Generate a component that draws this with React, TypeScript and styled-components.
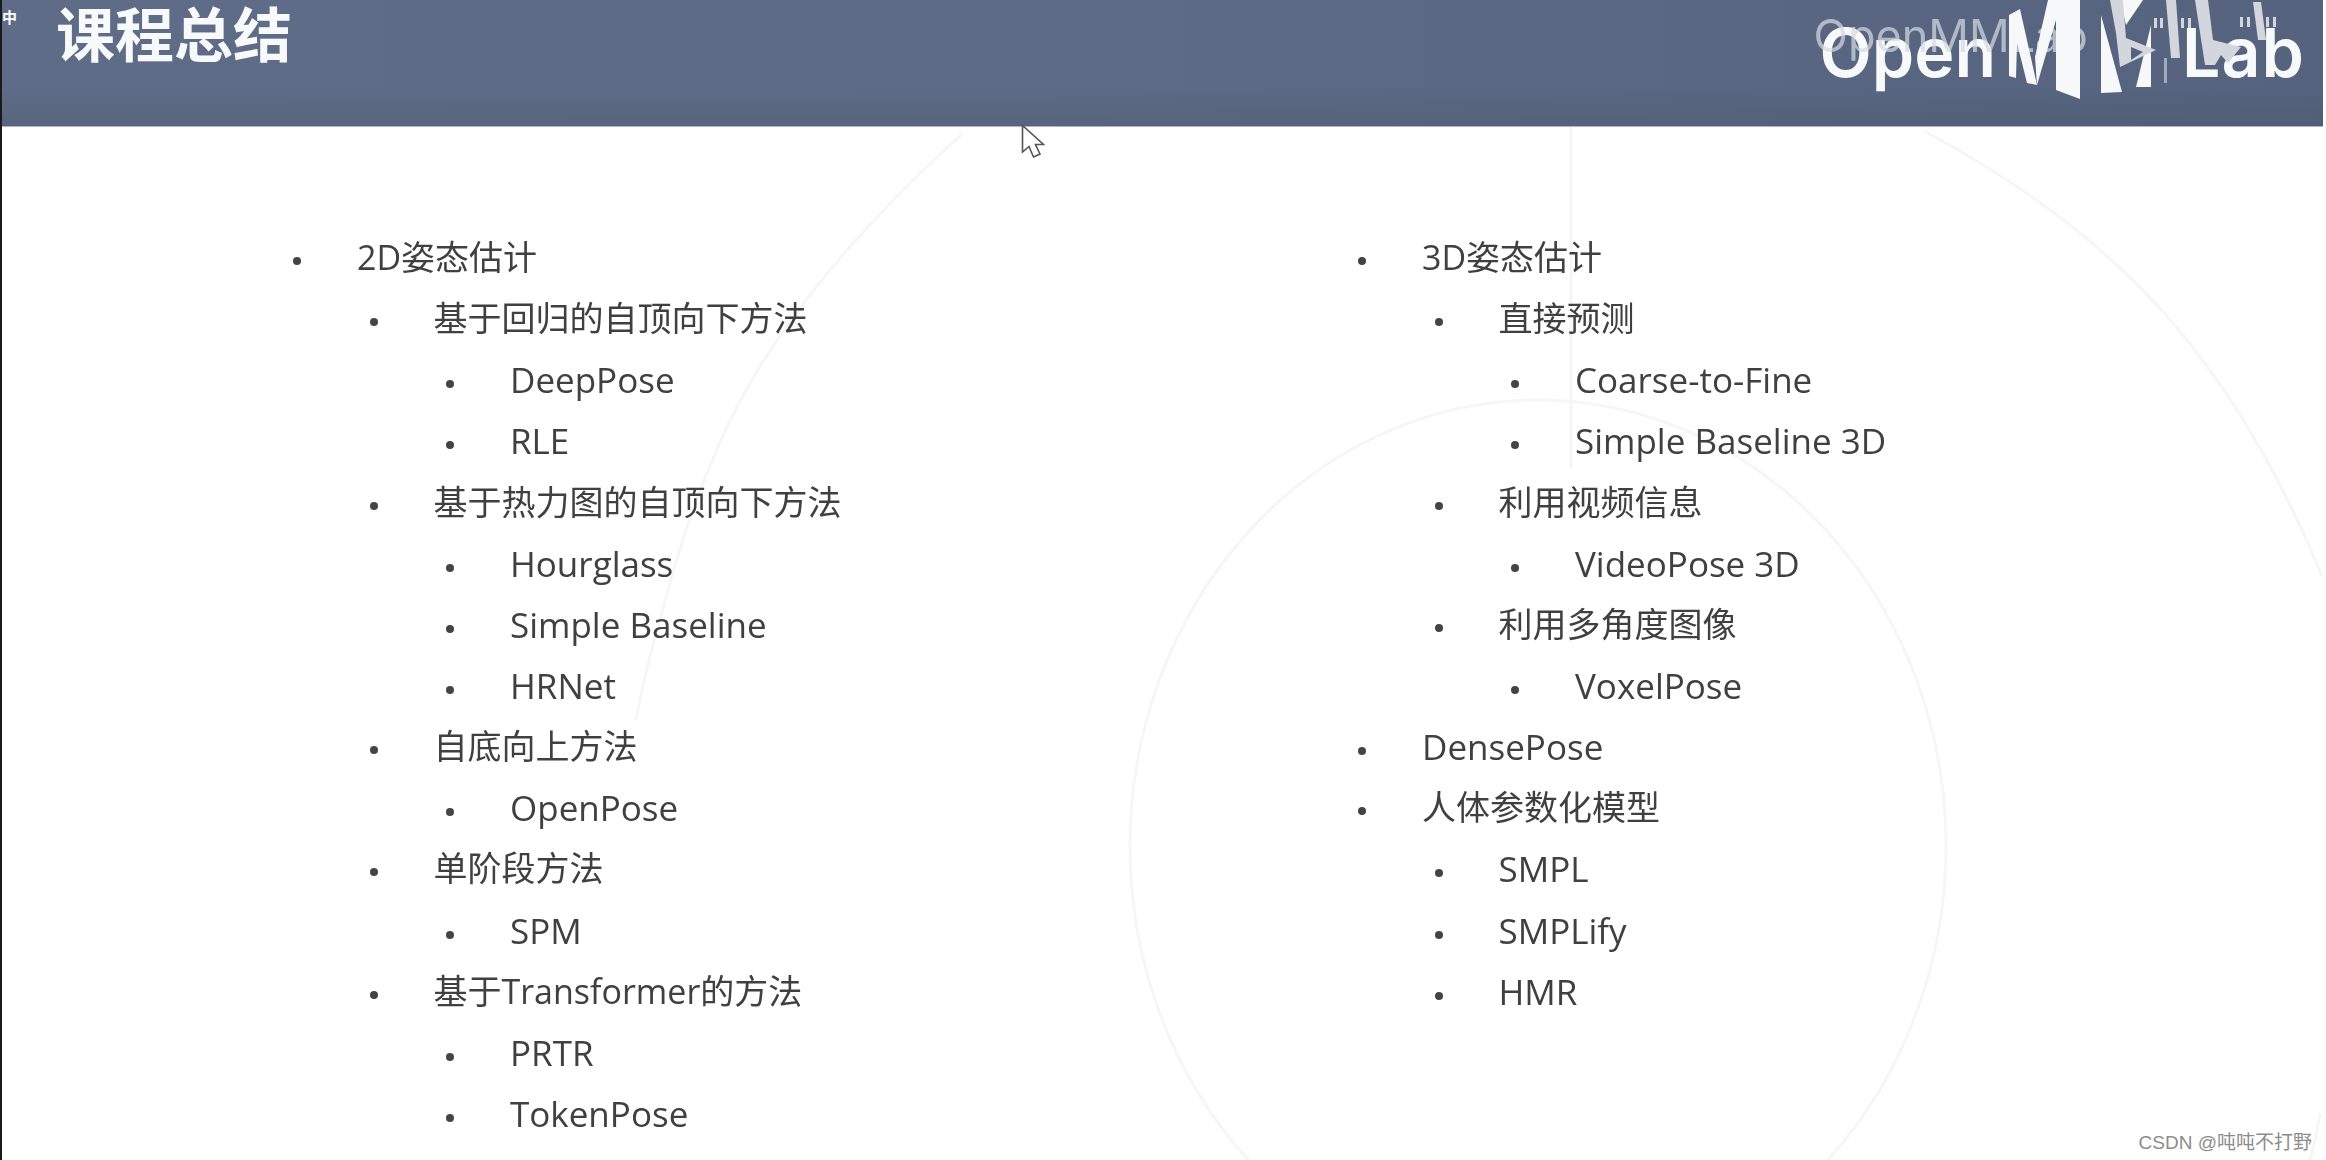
import React from "react";
import styled, { createGlobalStyle } from "styled-components";

const GlobalStyle = createGlobalStyle`
	html, body {
		margin: 0;
		padding: 0;
		background: #fff;
	}
`;

const fontStack = `"Open Sans", "Noto Sans CJK SC", sans-serif`;

interface Item {
	text: string;
	level: 0 | 1 | 2;
}

const leftItems: Item[] = [
	{ text: "2D姿态估计", level: 0 },
	{ text: "基于回归的自顶向下方法", level: 1 },
	{ text: "DeepPose", level: 2 },
	{ text: "RLE", level: 2 },
	{ text: "基于热力图的自顶向下方法", level: 1 },
	{ text: "Hourglass", level: 2 },
	{ text: "Simple Baseline", level: 2 },
	{ text: "HRNet", level: 2 },
	{ text: "自底向上方法", level: 1 },
	{ text: "OpenPose", level: 2 },
	{ text: "单阶段方法", level: 1 },
	{ text: "SPM", level: 2 },
	{ text: "基于Transformer的方法", level: 1 },
	{ text: "PRTR", level: 2 },
	{ text: "TokenPose", level: 2 },
];

const rightItems: Item[] = [
	{ text: "3D姿态估计", level: 0 },
	{ text: "直接预测", level: 1 },
	{ text: "Coarse-to-Fine", level: 2 },
	{ text: "Simple Baseline 3D", level: 2 },
	{ text: "利用视频信息", level: 1 },
	{ text: "VideoPose 3D", level: 2 },
	{ text: "利用多角度图像", level: 1 },
	{ text: "VoxelPose", level: 2 },
	{ text: "DensePose", level: 0 },
	{ text: "人体参数化模型", level: 0 },
	{ text: "SMPL", level: 1 },
	{ text: "SMPLify", level: 1 },
	{ text: "HMR", level: 1 },
];

// rows with only latin text run a little wider in the slide font
const isLatin = (text: string) => /^[\x20-\x7e]+$/.test(text);

function Outline({ items }: { items: Item[] }) {
	return (
		<OutlineColumn>
			{items.map((item) => (
				<OutlineRow
					key={item.text}
					$level={item.level}
					$latin={isLatin(item.text)}
				>
					<Bullet />
					{item.text}
				</OutlineRow>
			))}
		</OutlineColumn>
	);
}

export default function App() {
	return (
		<Page>
			<GlobalStyle />
			<BackgroundArt viewBox="0 0 2326 1160" aria-hidden="true">
				<path d="M963 133Q780 299 717 449Q686 520 663 609Q645 670 636 720" />
				<path d="M1924 131Q2106 228 2203 361Q2270 450 2322 576" />
				<path d="M2320 1113Q2316 1140 2310 1160" />
				<ellipse cx="1538" cy="846" rx="408" ry="446" />
				<path d="M1571 126V468" />
			</BackgroundArt>

			<Header>
				<ImeMark>中</ImeMark>
				<Title>课程总结</Title>
				<Logo>
					<LogoWord>Open</LogoWord>
					<LabWord>Lab</LabWord>
					<GhostName>OpenMMLab</GhostName>
					<LogoMark viewBox="2000 0 300 110" aria-hidden="true">
						<g fill="#f7f8fa">
							<polygon points="2011,15 2022,9 2039,85 2029,83 2019,43 2018,78 2011,76" />
							<polygon points="2037,57 2050,0 2082,0 2082,99 2058,90 2058,20 2039,85" />
							<polygon points="2103,15 2124,92 2103,93" />
							<polygon points="2138,87 2153,25 2153,87" />
							<polygon points="2122,0 2145,0 2128,25" />
						</g>
						<g fill="#d3d6dc">
							<polygon points="2112,0 2125,0 2128,38 2158,50 2122,67 2118,33" />
							<polygon points="2168,0 2178,0 2182,58 2173,58" />
							<polygon points="2197,0 2210,0 2215,40 2243,47 2230,63 2223,55 2217,65 2207,65" />
							<polygon points="2255,2 2263,2 2268,40 2260,40" />
							<rect x="2156" y="18" width="3" height="10" />
							<rect x="2162" y="18" width="3" height="10" />
							<rect x="2183" y="18" width="3" height="10" />
							<rect x="2190" y="18" width="3" height="10" />
							<rect x="2242" y="17" width="3" height="10" />
							<rect x="2249" y="17" width="3" height="10" />
							<rect x="2268" y="17" width="3" height="10" />
							<rect x="2275" y="17" width="3" height="10" />
						</g>
						<rect x="2166" y="58" width="3" height="25" fill="#a3acbc" />
						<polygon points="2133,47 2145,52 2133,60" fill="#55637d" />
					</LogoMark>
				</Logo>
			</Header>

			<Cursor viewBox="0 0 24 36" aria-hidden="true">
				<path d="M1.5 1.5V28L8 22.5L12.5 33L19 30L14.5 20.5H22.5Z" />
			</Cursor>

			<Columns>
				<Outline items={leftItems} />
				<Outline items={rightItems} />
			</Columns>

			<Watermark>CSDN @吨吨不打野</Watermark>
		</Page>
	);
}

const Page = styled.div`
	position: relative;
	width: 2326px;
	height: 1160px;
	overflow: hidden;
	background: #fff;
	border-left: 2px solid #1a1a1a;
	border-right: 3px solid #fff;
	box-sizing: border-box;
	font-family: ${fontStack};
`;

const BackgroundArt = styled.svg`
	position: absolute;
	top: 0;
	left: -2px;
	width: 2326px;
	height: 1160px;
	fill: none;
	stroke: #f6f6f6;
	stroke-width: 3;
`;

const Header = styled.header`
	position: relative;
	display: flex;
	align-items: flex-start;
	justify-content: space-between;
	height: 127px;
	padding: 0 18px 0 54px;
	box-sizing: border-box;
	border-bottom: 1px solid #aab4c6;
	background:
		linear-gradient(180deg, transparent 68%, rgba(50, 60, 75, 0.14) 100%),
		linear-gradient(90deg, #5f6c87 0%, #5e6b86 45%, #55637e 100%);
`;

const ImeMark = styled.span`
	position: absolute;
	top: 7px;
	left: 0;
	font-size: 15px;
	line-height: 20px;
	font-weight: 700;
	color: #fff;
`;

const Title = styled.h1`
	margin: 0;
	font-size: 59px;
	line-height: 68px;
	font-weight: 700;
	color: #f8f9fa;
	filter: blur(0.5px);
`;

const Logo = styled.div`
	position: relative;
	display: flex;
	align-items: flex-start;
	gap: 186px;
	font-family: "Inter", "Open Sans", sans-serif;
	filter: blur(0.6px);
`;

const GhostName = styled.span`
	position: absolute;
	top: 9px;
	left: -6px;
	font-size: 45px;
	line-height: 54px;
	color: rgba(214, 217, 224, 0.72);
`;

const LogoWord = styled.span`
	padding-top: 10px;
	font-size: 68px;
	line-height: 84px;
	font-weight: 600;
	color: #f8f9fa;
`;

const LabWord = styled(LogoWord)`
	letter-spacing: 1px;
`;

const LogoMark = styled.svg`
	position: absolute;
	top: 0;
	left: 178px;
	width: 300px;
	height: 110px;
`;

const Cursor = styled.svg`
	position: absolute;
	top: 124px;
	left: 1019px;
	width: 24px;
	height: 36px;
	fill: #fff;
	stroke: #555;
	stroke-width: 1.6;
`;

const Columns = styled.main`
	position: relative;
	display: grid;
	grid-template-columns: 1065px 1fr;
	padding: 100px 0 0 285px;
	filter: blur(0.4px);
`;

const OutlineColumn = styled.ul`
	margin: 0;
	padding: 0;
	list-style: none;
`;

const OutlineRow = styled.li<{ $level: number; $latin: boolean }>`
	position: relative;
	height: 61.15px;
	line-height: 61px;
	padding-left: ${({ $level }) => 70 + $level * 76.5}px;
	font-size: ${({ $latin }) => ($latin ? 35 : 34)}px;
	color: #404040;
	white-space: nowrap;
`;

const Bullet = styled.i`
	display: inline-block;
	width: 8px;
	height: 8px;
	border-radius: 50%;
	background: #444;
	margin-left: -64px;
	margin-right: 56px;
	vertical-align: 5px;
`;

const Watermark = styled.span`
	position: absolute;
	right: 11px;
	bottom: 6px;
	font-family: "Liberation Sans", "Noto Sans CJK SC", sans-serif;
	font-size: 19px;
	color: #8c8c8c;
`;
